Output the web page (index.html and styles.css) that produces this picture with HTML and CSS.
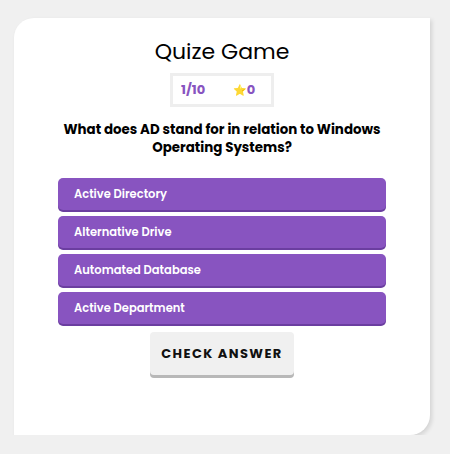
FILE: index.html
```html
<!DOCTYPE html>
<html>
<head>
<meta charset="utf-8">
<link rel="stylesheet" href="styles.css">
</head>
<body>
<div class="card">
  <h1 class="title">Quize Game</h1>
  <div class="score">
    <span class="count">1/10</span>
    <span class="stars"><span class="star">⭐</span>0</span>
  </div>
  <p class="question">What does AD stand for in relation to Windows Operating Systems?</p>
  <div class="options">
    <button class="option">Active Directory</button>
    <button class="option">Alternative Drive</button>
    <button class="option">Automated Database</button>
    <button class="option">Active Department</button>
  </div>
  <button class="check">CHECK ANSWER</button>
</div>
</body>
</html>
```
FILE: styles.css
```css
html, body {
  margin: 0;
  padding: 0;
  background: #f0f0f0;
}
body {
  font-family: "Poppins", "Open Sans", "Liberation Sans", sans-serif;
  padding: 18px 20px 0 14px;
}
.card {
  width: 416px;
  height: 417px;
  box-sizing: border-box;
  background: #fff;
  border-radius: 20px 0 20px 0;
  box-shadow: 2px 2px 4px rgba(0,0,0,0.12);
  display: flex;
  flex-direction: column;
  align-items: center;
  padding-top: 20px;
}
.title {
  margin: 0;
  font-size: 22px;
  font-weight: 400;
  line-height: 28px;
  color: #000;
}
.score {
  margin-top: 7px;
  width: 104px;
  height: 34px;
  box-sizing: border-box;
  border: 3px solid #eeeeee;
  display: flex;
  align-items: center;
  padding-left: 8px;
  font-weight: 700;
  font-size: 13px;
  color: #8854c0;
}
.count {
  width: 52px;
}
.star {
  font-size: 11px;
  font-family: "Noto Color Emoji", sans-serif;
}
.question {
  margin: 14px 0 0;
  width: 340px;
  text-align: center;
  font-size: 13.4px;
  font-weight: 700;
  line-height: 18px;
  color: #000;
}
.options {
  margin-top: 21px;
  width: 328px;
  display: flex;
  flex-direction: column;
  gap: 6px;
}
.option {
  height: 32px;
  box-sizing: border-box;
  border: 0;
  border-radius: 5px;
  background: #8854c0;
  box-shadow: 0 2px 0 #6b3ea0;
  color: #fff;
  font-family: inherit;
  font-size: 11.5px;
  font-weight: 600;
  text-align: left;
  padding: 0 16px;
}
.check {
  margin-top: 8px;
  width: 144px;
  height: 43px;
  border: 0;
  border-radius: 4px;
  background: #f0f0f0;
  box-shadow: 0 3px 0 #b8b8b8;
  font-family: inherit;
  font-size: 13px;
  font-weight: 700;
  letter-spacing: 1.4px;
  color: #111;
}
```
